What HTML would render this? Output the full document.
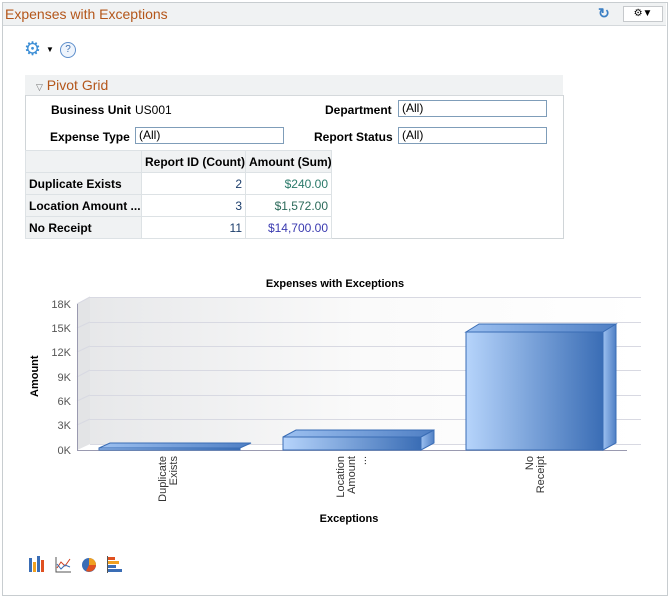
<!DOCTYPE html>
<html><head><style>
body{margin:0;width:671px;height:598px;background:#fff;font-family:"Liberation Sans",Arial,sans-serif;font-size:12px;position:relative;overflow:hidden}
.a{position:absolute}
.b{font-weight:bold}
.inp{position:absolute;height:17px;border:1px solid #7f9db9;background:#fff;font-size:12px;line-height:15px;padding-left:3px;box-sizing:border-box}
table{table-layout:fixed;border-collapse:collapse}
td{border:1px solid #dde2e5;padding:0 3px;height:21px;font-size:12px;white-space:nowrap;overflow:hidden}
</style></head><body>
<div class="a" style="left:2px;top:2px;width:664px;height:592px;border:1px solid #c8cdd0"></div>
<div class="a" style="left:3px;top:3px;width:663px;height:22px;background:#f0f2f3;border-bottom:1px solid #d5d9dc"></div>
<div class="a" style="left:5px;top:6px;font-size:14px;color:#b4561a">Expenses with Exceptions</div>
<div class="a" style="left:598px;top:5px;color:#3b7fc4;font-size:14px;font-weight:bold">&#x21bb;</div>
<div class="a" style="left:623px;top:6px;width:38px;height:14px;border:1px solid #c6c9cc;background:#fff;font-size:10px;text-align:center;line-height:14px">&#9881;&#9660;</div>
<div class="a" style="left:24px;top:40px;color:#3d8fd6;font-size:19px;line-height:19px">&#9881;</div>
<div class="a" style="left:46px;top:45px;font-size:8px">&#9660;</div>
<div class="a" style="left:60px;top:42px;width:14px;height:14px;border:1px solid #5e8fcc;border-radius:50%;color:#3d6fb0;font-size:10px;text-align:center;line-height:14px;background:#eef4fc">?</div>

<div class="a" style="left:25px;top:75px;width:538px;height:20px;background:#f0f2f3;border-bottom:1px solid #d5d9dc"></div>
<div class="a" style="left:36px;top:77px;font-size:14px;color:#b4561a"><span style="font-size:9px;color:#777">&#9661;</span> Pivot Grid</div>
<div class="a" style="left:25px;top:95px;width:537px;height:143px;border:1px solid #d0d5d8;border-top:none"></div>
<div class="a b" style="left:51px;top:103px">Business Unit</div>
<div class="a" style="left:135px;top:103px">US001</div>
<div class="a b" style="left:325px;top:103px">Department</div>
<div class="inp" style="left:398px;top:100px;width:149px">(All)</div>
<div class="a b" style="left:50px;top:130px">Expense Type</div>
<div class="inp" style="left:135px;top:127px;width:149px">(All)</div>
<div class="a b" style="left:314px;top:130px">Report Status</div>
<div class="inp" style="left:398px;top:127px;width:149px">(All)</div>
<table class="a" style="left:25px;top:150px;width:306px">
<colgroup><col style="width:116px"><col style="width:104px"><col style="width:86px"></colgroup>
<tr style="background:#f0f2f3"><td></td><td class="b">Report ID (Count)</td><td class="b">Amount (Sum)</td></tr>
<tr><td class="b" style="background:#f0f2f3">Duplicate Exists</td><td style="text-align:right;color:#1b3d6b">2</td><td style="text-align:right;color:#2b7a6a">$240.00</td></tr>
<tr><td class="b" style="background:#f0f2f3">Location Amount ...</td><td style="text-align:right;color:#1b3d6b">3</td><td style="text-align:right;color:#2b6a5a">$1,572.00</td></tr>
<tr><td class="b" style="background:#f0f2f3">No Receipt</td><td style="text-align:right;color:#1b3d6b">11</td><td style="text-align:right;color:#3a3ab0">$14,700.00</td></tr>
</table>

<svg class="a" style="left:0;top:0" width="671" height="598" font-family="Liberation Sans, sans-serif">
<defs>
<linearGradient id="wall" x1="0" x2="1" y1="0" y2="0"><stop offset="0" stop-color="#e6e7e9"/><stop offset="0.5" stop-color="#fafafa"/><stop offset="1" stop-color="#fff"/></linearGradient>
<linearGradient id="bar" x1="0" x2="1"><stop offset="0" stop-color="#b6d4fb"/><stop offset="1" stop-color="#3a6db5"/></linearGradient>
<linearGradient id="side" x1="0" x2="1"><stop offset="0" stop-color="#9cc0f0"/><stop offset="1" stop-color="#4f7fc4"/></linearGradient>
</defs>
<text x="335" y="287" font-size="11" font-weight="bold" text-anchor="middle">Expenses with Exceptions</text>
<polygon points="90,297 641,297 641,444 90,444 77,450 77,304" fill="url(#wall)"/>
<polygon points="77,304 90,297 90,444 77,450" fill="#e3e4e6"/>
<g stroke="#d8d9e2" stroke-width="1" fill="none">
<path d="M90,297.5H641M90,322.5H641M90,346.5H641M90,370.5H641M90,395.5H641M90,419.5H641M90,444.5H641"/>
<path d="M77,304L90,297M77,328L90,322M77,352L90,346M77,377L90,370M77,401L90,395M77,425L90,419"/>
</g>
<path d="M77.5,304V450.5H627" stroke="#9a9ab0" fill="none"/>
<g font-size="11" fill="#555" text-anchor="end">
<text x="71" y="308">18K</text><text x="71" y="332">15K</text><text x="71" y="356">12K</text><text x="71" y="381">9K</text><text x="71" y="405">6K</text><text x="71" y="429">3K</text><text x="71" y="454">0K</text>
</g>
<g stroke="#3a6db5" stroke-width="1">
<polygon points="99,448 110,443 251,443 240,448" fill="url(#side)"/>
<rect x="99" y="448" width="141" height="2" fill="url(#bar)"/>
<polygon points="283,437 296,430 434,430 421,437" fill="url(#side)"/>
<rect x="283" y="437" width="138" height="13" fill="url(#bar)"/>
<polygon points="421,437 434,430 434,443 421,450" fill="url(#side)"/>
<polygon points="466,332 479,324 616,324 603,332" fill="url(#side)"/>
<rect x="466" y="332" width="137" height="118" fill="url(#bar)"/>
<polygon points="603,332 616,324 616,443 603,450" fill="url(#side)"/>
</g>
<text transform="translate(38,397) rotate(-90)" font-size="11" font-weight="bold">Amount</text>
<g font-size="11" fill="#333" text-anchor="end">
<text transform="translate(166,456) rotate(-90)">Duplicate</text>
<text transform="translate(177,456) rotate(-90)">Exists</text>
<text transform="translate(344,456) rotate(-90)">Location</text>
<text transform="translate(355,456) rotate(-90)">Amount</text>
<text transform="translate(366,456) rotate(-90)">...</text>
<text transform="translate(533,456) rotate(-90)">No</text>
<text transform="translate(544,456) rotate(-90)">Receipt</text>
</g>
<text x="349" y="522" font-size="11" font-weight="bold" text-anchor="middle">Exceptions</text>
<g>
<rect x="29" y="558" width="3" height="14" fill="#3a6db5"/><rect x="33" y="562" width="3" height="10" fill="#f0a020"/><rect x="37" y="556" width="3" height="16" fill="#3a6db5"/><rect x="41" y="560" width="3" height="12" fill="#e05020"/>
<path d="M56,557V572H71" stroke="#555" fill="none"/><path d="M57,568L61,562L65,566L70,559" stroke="#d04020" fill="none"/><path d="M57,564L61,569L65,565L70,567" stroke="#3a6db5" fill="none"/>
<circle cx="89" cy="565" r="7" fill="#3a6db5"/><path d="M89,565V558A7,7 0 0 1 96,565Z" fill="#f0a020"/><path d="M89,565H96A7,7 0 0 1 86,571Z" fill="#e05020"/>
<rect x="108" y="557" width="7" height="3" fill="#e05020"/><rect x="108" y="561" width="11" height="3" fill="#f0a020"/><rect x="108" y="565" width="8" height="3" fill="#3a6db5"/><rect x="108" y="569" width="14" height="3" fill="#3a6db5"/><path d="M107.5,556V573" stroke="#555"/>
</g>
</svg>
</body></html>
